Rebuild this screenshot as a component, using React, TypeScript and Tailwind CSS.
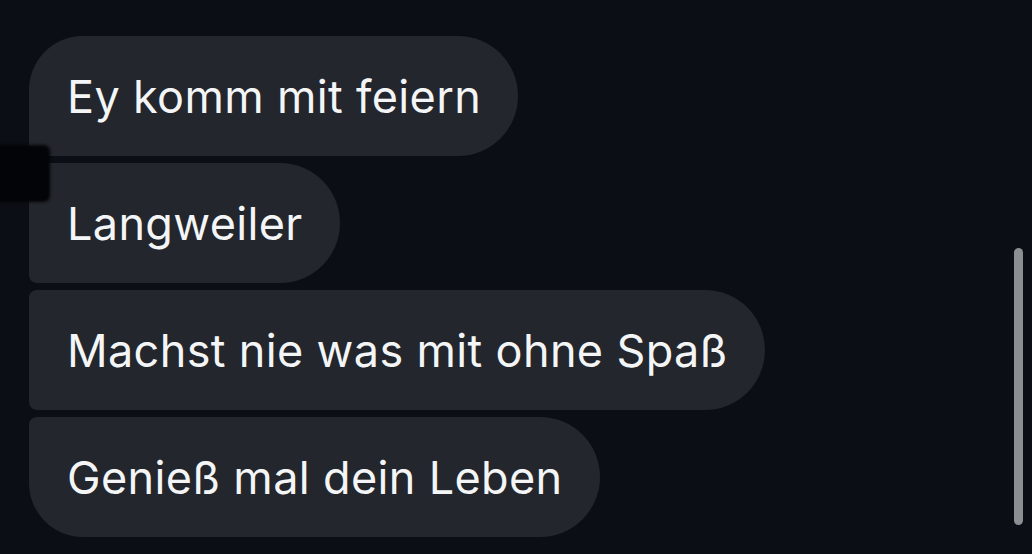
const messages = [
  { text: "Ey komm mit feiern", shape: "rounded-tl-[54px] rounded-bl-[8px]" },
  { text: "Langweiler", shape: "rounded-l-[8px]" },
  { text: "Machst nie was mit ohne Spaß", shape: "rounded-l-[8px]" },
  { text: "Genieß mal dein Leben", shape: "rounded-tl-[8px] rounded-bl-[54px]" },
];

export default function App() {
  return (
    <div className="relative w-[1032px] h-[554px] overflow-hidden bg-[#0b0f15] font-['Inter',sans-serif]">
      <div className="flex flex-col items-start gap-[7px] pt-[36px] pl-[29px]">
        {messages.map((m) => (
          <div
            key={m.text}
            className={`h-[120px] flex items-center pl-[38px] pr-[37px] bg-[#23262c] rounded-r-[60px] ${m.shape}`}
          >
            <span className="text-[45px] leading-none text-[#f4f5f6] tracking-[0.35px] whitespace-nowrap">
              {m.text}
            </span>
          </div>
        ))}
      </div>

      {/* dunkler Fleck links */}
      <div className="absolute left-[-6px] top-[145px] w-[56px] h-[57px] bg-[#030407] rounded-[6px] blur-[1.5px]" />

      {/* Scrollbalken */}
      <div className="absolute left-[1014px] top-[248px] w-[9px] h-[277px] rounded-full bg-[#8b8f92]" />
    </div>
  );
}
